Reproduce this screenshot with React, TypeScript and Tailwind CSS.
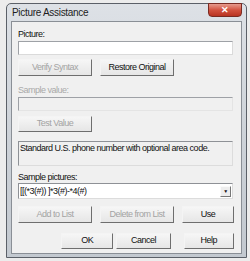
const ui = { fontFamily: '"Liberation Sans", Arial, sans-serif' };

function Btn({ label, disabled, w }: { label: string; disabled?: boolean; w: string }) {
  return (
    <div
      className={`${w} h-full flex items-center justify-center text-[9px] tracking-[-0.5px] whitespace-nowrap border border-t-[#f4f4f4] border-l-[#f4f4f4] border-r-[#6e6e6e] border-b-[#6e6e6e] bg-gradient-to-b from-[#f6f6f6] to-[#e6e6e6] ${disabled ? 'text-[#a3a3a3]' : 'text-[#111]'}`}
    >
      {label}
    </div>
  );
}

export default function App() {
  return (
    <div className="w-[250px] h-[261px] bg-[#ececec] pt-[3px] pl-[6px] overflow-hidden" style={ui}>
      <div className="w-[241px] h-[255px] rounded-t-[5px] border border-[#5b6068] bg-gradient-to-b from-[#dde1e6] via-[#ced3d9] to-[#c3c9d0] flex flex-col">
        {/* title bar */}
        <div className="h-[17px] flex items-start justify-between">
          <span className="text-[10px] tracking-[-0.3px] leading-[14px] text-[#1d1d1d] pl-[5px] pt-[2px]">Picture Assistance</span>
          <div className="w-[34px] h-[14px] mr-[4px] -mt-[1px] rounded-b-[4px] border border-[#7a2b22] bg-gradient-to-b from-[#e59a8d] via-[#d2523f] to-[#b83321] flex items-center justify-center text-white text-[9px] font-bold leading-none">
            ✕
          </div>
        </div>

        {/* client */}
        <div className="mx-[4px] h-[233px] border border-[#8a8f96] bg-[#f0f0f0] pl-[6px] pr-[7px] pt-[6px] flex flex-col text-[9px] tracking-[-0.5px]">
          <div className="h-[12px] leading-[12px] text-[#111]">Picture:</div>
          <div className="mt-[1px] h-[14px] w-[215px] bg-white border border-[#9ea1a6] border-b-[#dadada] border-r-[#dadada]" />

          <div className="mt-[4px] h-[17px] flex gap-[8px]">
            <Btn label="Verify Syntax" disabled w="w-[74px]" />
            <Btn label="Restore Original" w="w-[74px]" />
          </div>

          <div className="mt-[8px] h-[12px] leading-[12px] text-[#a9a9a9]">Sample value:</div>
          <div className="mt-[1px] h-[14px] w-[215px] bg-[#f0f0f0] border border-[#9ea1a6] border-b-[#e4e4e4] border-r-[#e4e4e4]" />

          <div className="mt-[5px] h-[16px] flex">
            <Btn label="Test Value" disabled w="w-[74px]" />
          </div>

          <div className="mt-[9px] h-[25px] w-[215px] border border-[#8e9196] border-b-[#dcdcdc] border-r-[#dcdcdc] bg-[#f0f0f0] px-[1px] pt-[1px] leading-[11px] text-[#111]">
            Standard U.S. phone number with optional area code.
          </div>

          <div className="mt-[5px] h-[12px] leading-[12px] text-[#111]">Sample pictures:</div>
          <div className="h-[16px] w-[215px] bg-white border border-[#8e9196] border-b-[#dcdcdc] border-r-[#dcdcdc] flex items-center justify-between">
            <span className="pl-[1px] leading-[12px] text-[#111]">[[(*3(#)) ]*3(#)-*4(#)</span>
            <div className="w-[11px] h-[11px] mr-[1px] bg-[#ededed] border border-t-[#fafafa] border-l-[#fafafa] border-r-[#777] border-b-[#777] flex items-center justify-center text-[5px] text-[#111] leading-none">
              ▼
            </div>
          </div>

          <div className="mt-[7px] h-[17px] flex gap-[8px]">
            <Btn label="Add to List" disabled w="w-[74px]" />
            <Btn label="Delete from List" disabled w="w-[74px]" />
            <Btn label="Use" w="w-[52px]" />
          </div>

          <div className="mt-[10px] h-[16px] flex gap-[3px] pl-[43px]">
            <Btn label="OK" w="w-[53px]" />
            <Btn label="Cancel" w="w-[55px]" />
            <div className="w-[7px]" />
            <Btn label="Help" w="w-[51px]" />
          </div>
        </div>
      </div>
    </div>
  );
}
